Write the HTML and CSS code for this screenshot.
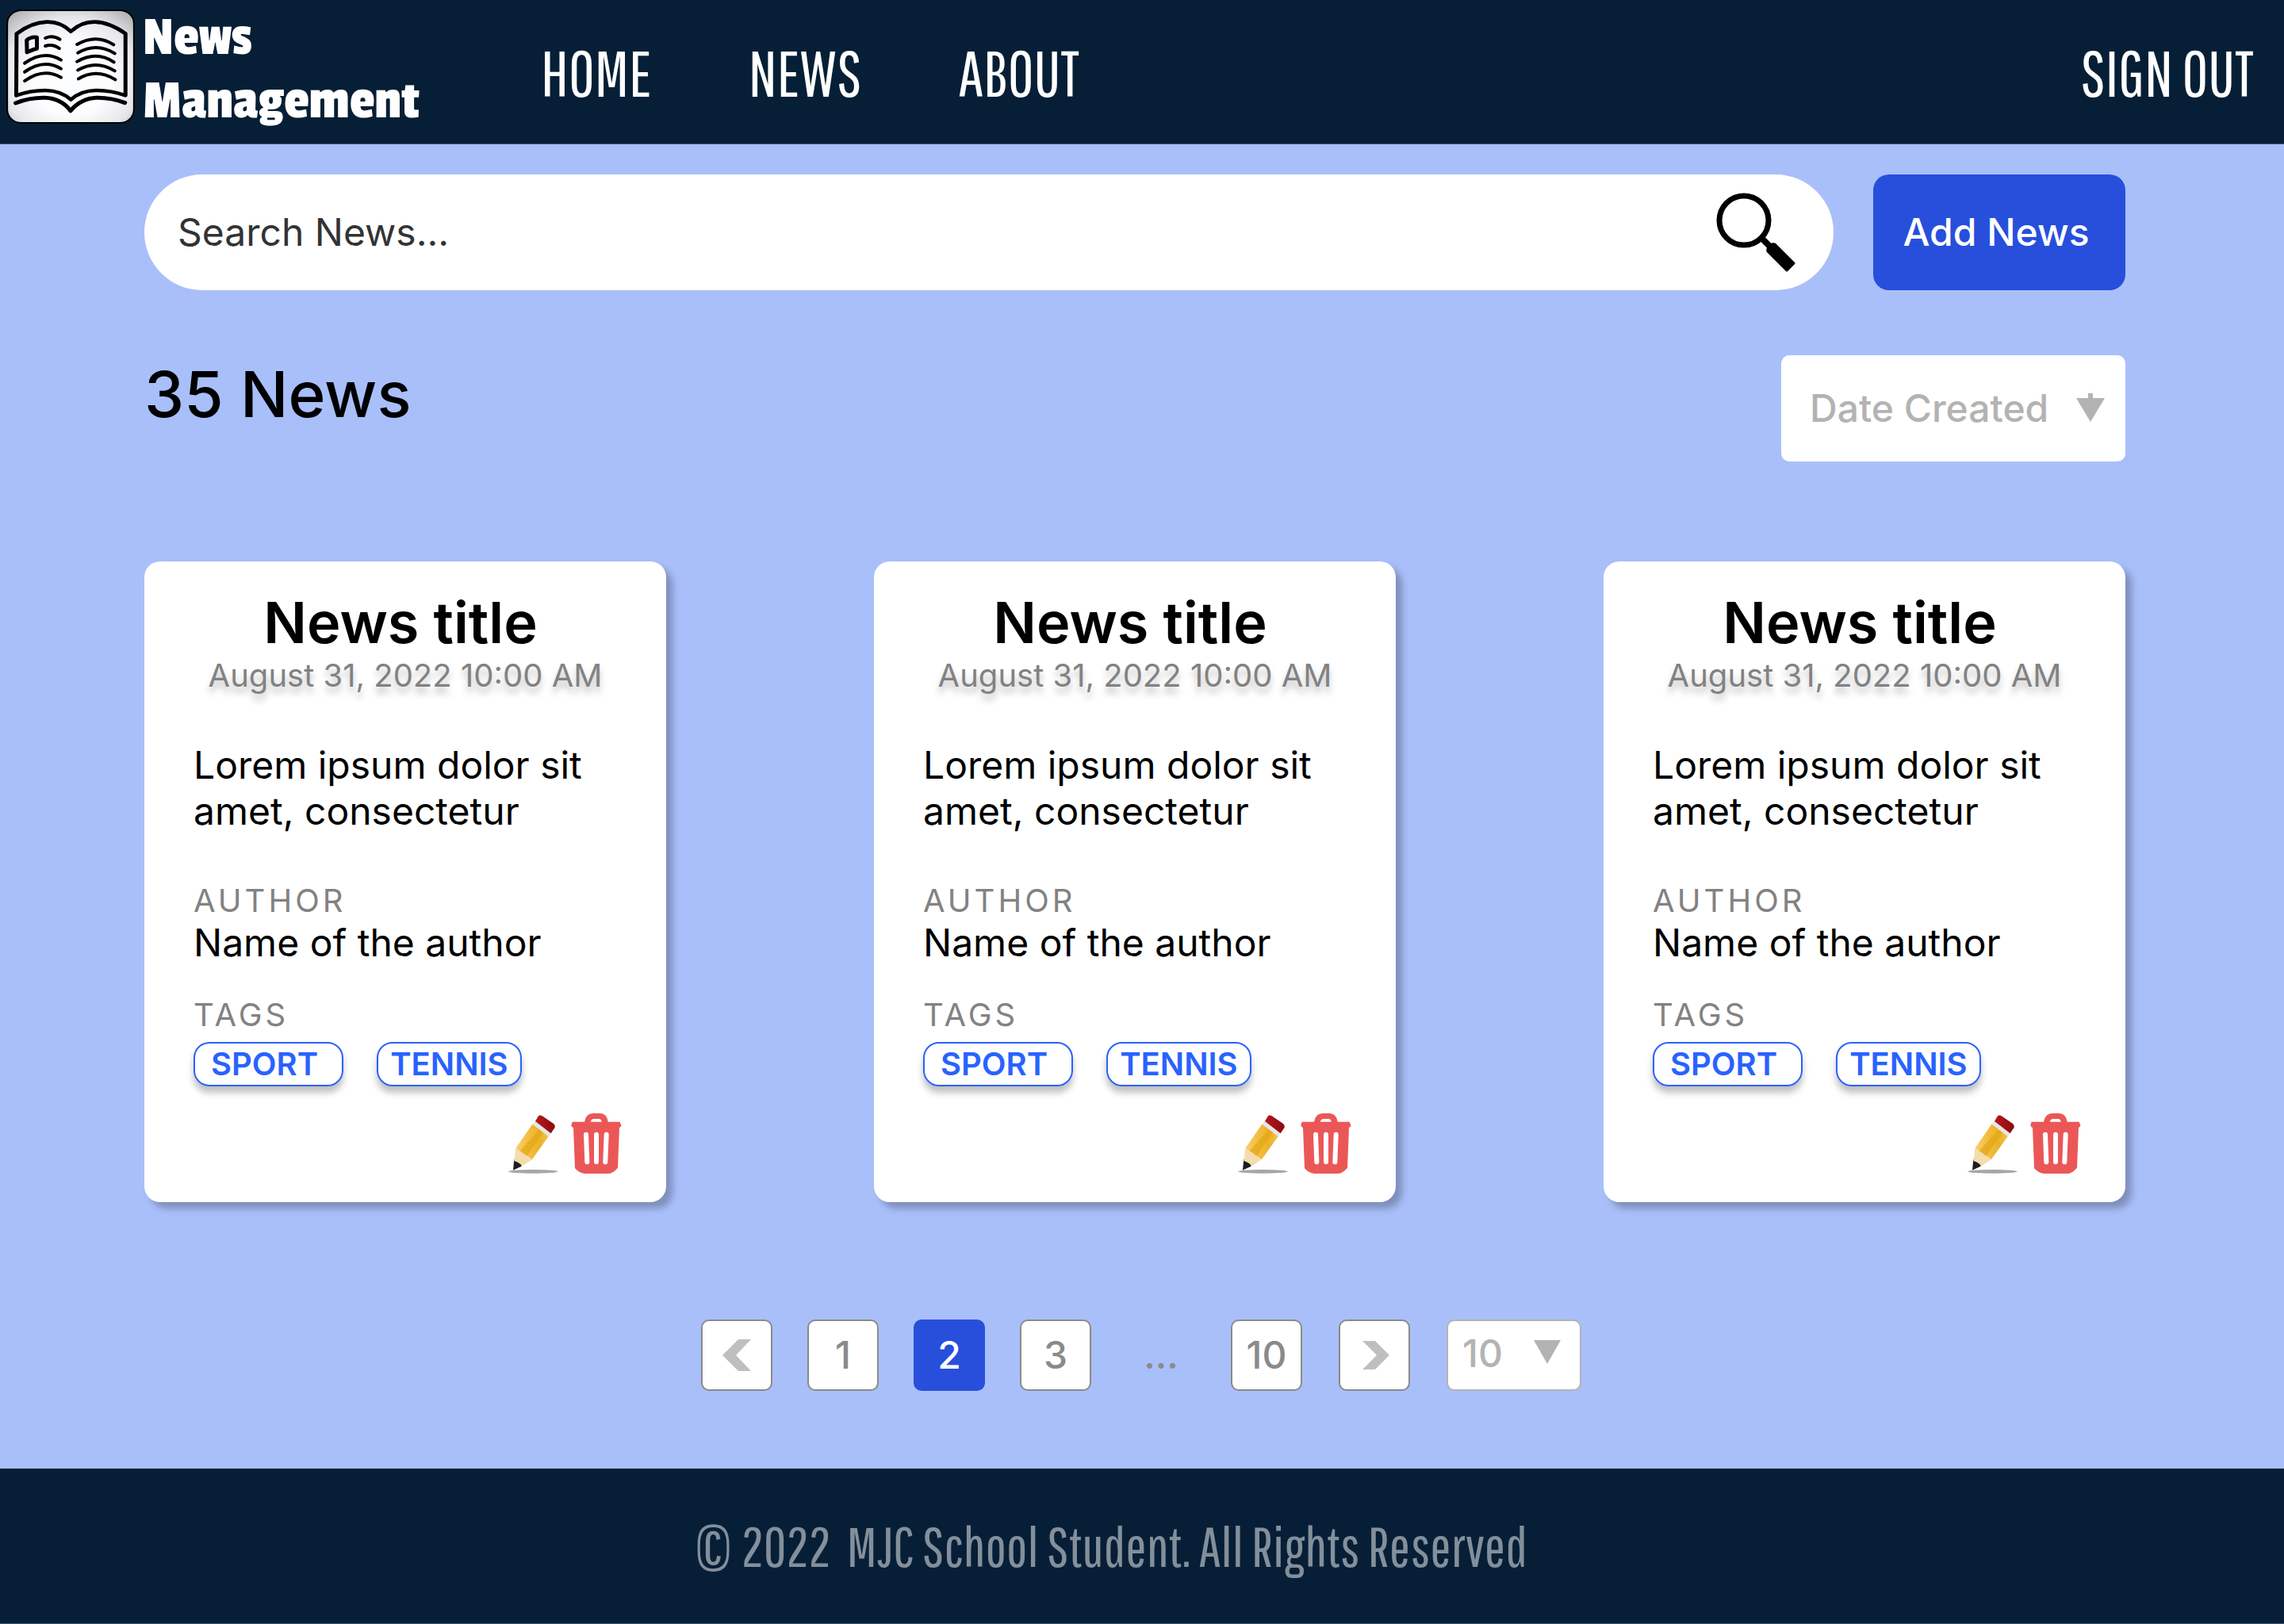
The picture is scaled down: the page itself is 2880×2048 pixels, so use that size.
FILE: index.html
```html
<!DOCTYPE html>
<html lang="en">
<head>
<meta charset="utf-8">
<meta name="viewport" content="width=device-width, initial-scale=1">
<title>News Management</title>
<link rel="stylesheet" href="styles.css">
</head>
<body>
<svg class="sprite" aria-hidden="true">
  <defs>
    <linearGradient id="wood" x1="0" y1="0" x2="1" y2="0">
      <stop offset="0" stop-color="#f9cf6c"/><stop offset=".4" stop-color="#f2bd3f"/>
      <stop offset=".7" stop-color="#eab22a"/><stop offset="1" stop-color="#f5c350"/>
    </linearGradient>
    <linearGradient id="rubber" x1="0" y1="0" x2="1" y2="0">
      <stop offset="0" stop-color="#b5191b"/><stop offset="1" stop-color="#8a0c0f"/>
    </linearGradient>
  </defs>
  <symbol id="pencil" viewBox="0 0 190 222">
    <ellipse cx="96" cy="214" rx="94" ry="7" fill="#a6a6a6"/>
    <path d="M20 209 24 168 46 175 52 194Z" fill="#1d1d1f"/>
    <path d="M24 174 30 126 92 168 54 194Q46 180 24 174Z" fill="#f3dcae"/>
    <path d="M30 126 94 34 158 76 92 168Z" fill="url(#wood)"/>
    <path d="M46 136 118 56 134 66 73 155Z" fill="#e2a714" opacity=".7"/>
    <path d="M94 36 104 21 165 65 154 81Z" fill="#e6e6ea"/>
    <path d="M104 24 115 5Q121-2 130 4L173 33Q181 40 177 49L163 70Z" fill="url(#rubber)"/>
  </symbol>
  <symbol id="trash" viewBox="0 0 190 228">
    <path fill="#eb5757" fill-rule="evenodd" d="M50 32Q56 0 82 0H108Q134 0 139 32H184L189 46Q189 52 182 54L176 206Q158 228 138 228H50Q30 226 14 208L8 54Q0 52 0 44L4 32ZM74 32H115Q114 21 104 21H86Q75 21 74 32Z"/>
    <path d="M56 80 60 184M95 80V184M133 80 129 184" stroke="#fff" stroke-width="18" stroke-linecap="round"/>
  </symbol>
</svg>

<header class="header">
  <a class="brand" href="#">
    <svg class="brand-icon" viewBox="22 36 454 432" preserveAspectRatio="none" aria-hidden="true">
      <defs>
        <radialGradient id="paper" cx=".5" cy=".6" r=".72">
          <stop offset=".45" stop-color="#fcfdff"/><stop offset=".75" stop-color="#e6e7ea"/><stop offset="1" stop-color="#b4b4b6"/>
        </radialGradient>
      </defs>
      <rect x="25" y="39" width="448" height="426" rx="50" fill="url(#paper)" stroke="#000" stroke-width="6"/>
      <g fill="none" stroke="#000" stroke-width="14" stroke-linecap="round" stroke-linejoin="round">
        <path d="M58 128Q110 85 165 83Q215 82 250 119Q287 82 335 83Q385 84 443 127L443 361Q390 341 338 342Q285 343 250 377Q215 343 160 342Q108 342 57 361Z"/>
        <path d="M55 390Q105 369 158 370Q215 372 249 419Q287 372 340 370Q392 369 441 389" stroke-width="15"/>
        <path d="M94 152Q108 138 130 141V184Q118 186 95 198Z"/>
        <g stroke-width="12">
          <path d="M160 144Q186 132 211 149M160 174Q186 165 209 183M87 239Q154 188 215 227M87 272Q154 221 215 260M87 306Q154 255 215 293M272 168Q340 127 401 169M275 200Q340 159 405 202M272 233Q340 191 402 235M275 265Q340 225 405 268M277 298Q340 257 407 301"/>
        </g>
      </g>
    </svg>
    <span class="brand-name">News<br>Management</span>
  </a>
  <nav class="nav">
    <a href="#">HOME</a>
    <a href="#">NEWS</a>
    <a href="#">ABOUT</a>
  </nav>
  <a class="sign-out" href="#">SIGN OUT</a>
</header>

<main class="main">
  <form class="toolbar">
    <div class="search">
      <input class="search-input" type="search" aria-label="Search news" placeholder="Search News...">
      <button class="icon-button" type="button" aria-label="Search">
        <svg class="search-icon" viewBox="0 0 100 100" aria-hidden="true">
          <circle cx="35" cy="35" r="31" fill="none" stroke="#000" stroke-width="7"/>
          <path d="M57 57 68 68" stroke="#000" stroke-width="8"/>
          <path d="M74 65 98 89 89 98 65 74Q64 70 67 68Q69 64 74 65Z" fill="#000" stroke="#000" stroke-width="3" stroke-linejoin="round"/>
        </svg>
      </button>
    </div>
    <button class="add-button" type="button">Add News</button>
  </form>

  <div class="summary">
    <h1 class="count">35 News</h1>
    <div class="select-wrap">
      <select class="sort-select" aria-label="Sort by"><option>Date Created</option></select>
      <svg class="sort-arrow" viewBox="0 0 36 36" aria-hidden="true"><path d="M0 6H15V0H21V6H36L18 36Z" fill="#b3b3b3"/></svg>
    </div>
  </div>

  <section class="cards" aria-label="News list">
    <article class="card">
      <h2 class="card-title">News title</h2>
      <time class="card-date" datetime="2022-08-31T10:00">August 31, 2022 10:00 AM</time>
      <p class="card-text">Lorem ipsum dolor sit amet, consectetur</p>
      <h3 class="label">AUTHOR</h3>
      <p class="author">Name of the author</p>
      <h3 class="label">TAGS</h3>
      <div class="tags"><span class="tag tag-wide">SPORT&nbsp;</span><span class="tag">TENNIS</span></div>
      <div class="actions">
        <button class="icon-button" type="button" aria-label="Edit"><svg class="pencil" aria-hidden="true"><use href="#pencil"/></svg></button>
        <button class="icon-button" type="button" aria-label="Delete"><svg class="trash" aria-hidden="true"><use href="#trash"/></svg></button>
      </div>
    </article>
    <article class="card">
      <h2 class="card-title">News title</h2>
      <time class="card-date" datetime="2022-08-31T10:00">August 31, 2022 10:00 AM</time>
      <p class="card-text">Lorem ipsum dolor sit amet, consectetur</p>
      <h3 class="label">AUTHOR</h3>
      <p class="author">Name of the author</p>
      <h3 class="label">TAGS</h3>
      <div class="tags"><span class="tag tag-wide">SPORT&nbsp;</span><span class="tag">TENNIS</span></div>
      <div class="actions">
        <button class="icon-button" type="button" aria-label="Edit"><svg class="pencil" aria-hidden="true"><use href="#pencil"/></svg></button>
        <button class="icon-button" type="button" aria-label="Delete"><svg class="trash" aria-hidden="true"><use href="#trash"/></svg></button>
      </div>
    </article>
    <article class="card">
      <h2 class="card-title">News title</h2>
      <time class="card-date" datetime="2022-08-31T10:00">August 31, 2022 10:00 AM</time>
      <p class="card-text">Lorem ipsum dolor sit amet, consectetur</p>
      <h3 class="label">AUTHOR</h3>
      <p class="author">Name of the author</p>
      <h3 class="label">TAGS</h3>
      <div class="tags"><span class="tag tag-wide">SPORT&nbsp;</span><span class="tag">TENNIS</span></div>
      <div class="actions">
        <button class="icon-button" type="button" aria-label="Edit"><svg class="pencil" aria-hidden="true"><use href="#pencil"/></svg></button>
        <button class="icon-button" type="button" aria-label="Delete"><svg class="trash" aria-hidden="true"><use href="#trash"/></svg></button>
      </div>
    </article>
  </section>
</main>

<nav class="pagination" aria-label="Pages">
  <div class="pages">
    <button class="page" type="button" aria-label="Previous page"><svg class="chevron" viewBox="0 0 36 40" aria-hidden="true"><path d="M36 0H20L0 20 20 40H36L17 20Z" fill="#bfbfbf"/></svg></button>
    <button class="page" type="button">1</button>
    <button class="page page-current" type="button" aria-current="page">2</button>
    <button class="page" type="button">3</button>
    <span class="dots">...</span>
    <button class="page" type="button">10</button>
  </div>
  <button class="page" type="button" aria-label="Next page"><svg class="chevron" viewBox="0 0 36 40" aria-hidden="true"><path d="M3 2H19L37 20 19 38H3L21 20Z" fill="#bfbfbf"/></svg></button>
  <div class="select-wrap">
    <select class="size-select" aria-label="News per page"><option>10</option></select>
    <svg class="size-arrow" viewBox="0 0 34 30" aria-hidden="true"><path d="M0 0H34L17 30Z" fill="#b3b3b3"/></svg>
  </div>
</nav>

<footer class="footer"><span class="copyright">©</span> 2022&nbsp; MJC School Student. All Rights Reserved</footer>
</body>
</html>
```
FILE: styles.css
```css
:root {
  --navy: #071f36;
  --sky: #a9bffa;
  --blue: #274fdb;
  --gray: #828282;
  --light-gray: #b3b3b3;
  --narrow: "Pathway Gothic One", "Roboto Condensed", "Liberation Sans", sans-serif;
}

* { box-sizing: border-box; }

body {
  margin: 0;
  min-height: 100vh;
  display: flex;
  flex-direction: column;
  background: var(--sky);
  color: #000;
  font-family: Inter, "Liberation Sans", sans-serif;
  font-size: 48px;
  line-height: 58px;
}

h1, h2, h3, p { margin: 0; font-weight: 400; }
button, input, select { font: inherit; color: inherit; border: 0; padding: 0; margin: 0; }
button { cursor: pointer; }
a { color: inherit; text-decoration: none; }
svg { display: block; }
.sprite { position: absolute; width: 0; height: 0; }
.icon-button { background: none; flex: none; }

/* Header */
.header {
  display: flex;
  align-items: flex-start;
  padding: 0 38px 0 8px;
  height: 182px;
  background: var(--navy);
  border-bottom: 1px solid #3f5878;
  color: #fff;
}
.brand { display: flex; gap: 10px; padding-top: 12px; width: 674px; }
.brand-icon { width: 162px; height: 144px; flex: none; }
.brand-name {
  margin-top: -4px;
  font-family: "Passion One", Roboto, "Liberation Sans", sans-serif;
  font-size: 72px;
  line-height: 80px;
}
.nav { display: flex; flex: 1; gap: 122px; }
.nav, .sign-out {
  padding-top: 52px;
  font-family: var(--narrow);
  font-size: 80px;
  line-height: 80px;
}

/* Content */
.main { padding: 38px 200px 0 182px; }
.toolbar { display: flex; gap: 50px; }
.search {
  flex: 1;
  display: flex;
  align-items: center;
  height: 146px;
  padding: 0 48px 0 42px;
  background: #fff;
  border-radius: 73px;
}
.search-input { flex: 1; min-width: 0; background: none; outline: 0; appearance: none; }
.search-input::placeholder { color: #333; opacity: 1; }
.search-icon { width: 100px; height: 100px; }
.add-button {
  width: 318px;
  padding-right: 8px;
  border-radius: 20px;
  background: var(--blue);
  color: #fff;
  font-weight: 500;
}

.summary { display: flex; justify-content: space-between; align-items: flex-start; margin-top: 82px; }
.count { font-size: 80px; line-height: 98px; font-weight: 500; }
.select-wrap { position: relative; color: var(--light-gray); font-weight: 500; }
select { appearance: none; background: #fff; display: block; }
.sort-select { width: 434px; height: 134px; padding-left: 36px; border-radius: 10px; }
.sort-arrow { position: absolute; right: 26px; top: 48px; width: 36px; height: 36px; pointer-events: none; }

.cards { display: grid; grid-template-columns: repeat(3, 1fr); gap: 262px; margin-top: 126px; }
.card {
  display: flex;
  flex-direction: column;
  padding: 34px 62px 36px;
  background: #fff;
  border-radius: 20px;
  box-shadow: 8px 8px 8px rgba(0, 0, 0, .25);
}
.card-title { padding-right: 12px; font-size: 72px; line-height: 86px; font-weight: 600; text-align: center; }
.card-date {
  font-size: 40px;
  line-height: 48px;
  color: var(--gray);
  text-align: center;
  text-shadow: 0 8px 8px rgba(0, 0, 0, .25);
}
.card-text { margin: 60px 0; }
.label { font-size: 40px; line-height: 48px; letter-spacing: 4px; color: var(--gray); }
.author { margin-bottom: 38px; }
.tags { display: flex; gap: 42px; margin-top: 10px; }
.tag {
  padding: 0 15px;
  border: 2px solid #2962ff;
  border-radius: 20px;
  box-shadow: 0 8px 8px rgba(0, 0, 0, .25);
  color: #2962ff;
  font-size: 40px;
  line-height: 52px;
  font-weight: 600;
}
.tag-wide { padding: 0 20px; }
.actions { display: flex; justify-content: flex-end; align-items: flex-end; gap: 16px; margin: 34px -6px 0 0; }
.pencil { width: 64px; height: 74px; }
.trash { width: 64px; height: 76px; }

/* Pagination */
.pagination { display: flex; justify-content: center; gap: 46px; padding: 148px 2px 98px 0; font-weight: 500; }
.pages { display: flex; gap: 44px; }
.page {
  display: flex;
  align-items: center;
  justify-content: center;
  width: 90px;
  height: 90px;
  border: 2px solid #8a8a8a;
  border-radius: 10px;
  background: #fff;
  color: #8a8a8a;
  font-weight: 500;
}
.page-current { background: var(--blue); border-color: var(--blue); color: #fff; }
.chevron { width: 36px; height: 40px; overflow: visible; }
.dots { width: 88px; line-height: 90px; text-align: center; color: #8a8a8a; }
.size-select {
  width: 170px;
  height: 90px;
  padding: 0 0 4px 18px;
  border: 2px solid var(--light-gray);
  border-radius: 10px;
}
.size-arrow { position: absolute; right: 26px; top: 26px; width: 34px; height: 30px; pointer-events: none; }

/* Footer */
.footer {
  flex: 1;
  min-height: 196px;
  padding: 58px 80px 0 0;
  background: var(--navy);
  border-bottom: 1px solid #3f5878;
  color: #838f9b;
  font-family: var(--narrow);
  font-size: 70px;
  line-height: 80px;
  text-align: center;
}
.copyright { font-size: 96px; line-height: 1px; vertical-align: -27px; }
```
